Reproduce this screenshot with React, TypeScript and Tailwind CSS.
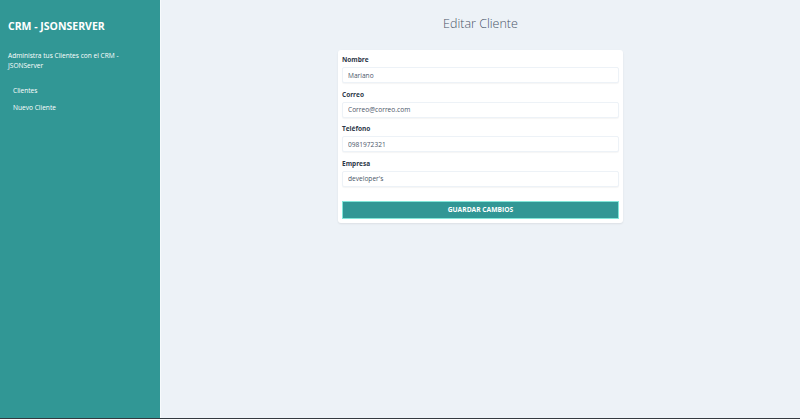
import React from "react";

const fields = [
	{ label: "Nombre", value: "Mariano" },
	{ label: "Correo", value: "Correo@correo.com" },
	{ label: "Teléfono", value: "0981972321" },
	{ label: "Empresa", value: "developer's" },
];

function Sidebar() {
	return (
		<aside className="w-[160px] shrink-0 bg-[#319795] px-[8px] pt-[19px] text-white">
			<h2 className="text-[10.5px] font-bold leading-[14px]">CRM - JSONSERVER</h2>
			<p className="mt-[18px] text-[6.6px] leading-[10px]">Administra tus Clientes con el CRM - JSONServer</p>
			<nav className="mt-[15px] flex flex-col gap-[7px] pl-[5px] text-[6.6px] leading-[10px]">
				<a className="block">Clientes</a>
				<a className="block">Nuevo Cliente</a>
			</nav>
		</aside>
	);
}

export default function App() {
	return (
		<div className="flex h-[419px] w-[800px] flex-col font-['Open_Sans',sans-serif]">
			<div className="flex min-h-0 flex-1">
				<Sidebar />
				<main className="flex-1 border-l border-[#f7fafc] bg-[#edf2f7]">
					<h1 className="mt-[15px] text-center text-[12.5px] font-light leading-[18px] text-[#4a5568]">Editar Cliente</h1>
					<form className="mx-auto mt-[17px] w-[285px] rounded-[3px] bg-white px-[4px] pt-[5px] pb-[4px] shadow-[0_1px_2px_rgba(0,0,0,0.08)]">
						{fields.map((field) => (
							<div key={field.label} className="mb-[6.5px]">
								<label className="block text-[6.5px] font-bold leading-[9px] text-[#2d3748]">{field.label}</label>
								<input
									readOnly
									value={field.value}
									className="mt-[3px] block h-[16px] w-full rounded-[2px] border border-[#edf2f7] bg-white px-[5px] text-[6.6px] text-[#4a5568] shadow-[0_1px_1px_rgba(0,0,0,0.04)]"
								/>
							</div>
						))}
						<button className="mt-[14px] block h-[18px] w-full border border-[#81e6d9] bg-[#319795] text-[6.7px] font-bold uppercase leading-[16px] text-white">
							Guardar Cambios
						</button>
					</form>
				</main>
			</div>
			<div className="h-[1px] bg-[#343a40]" />
		</div>
	);
}
